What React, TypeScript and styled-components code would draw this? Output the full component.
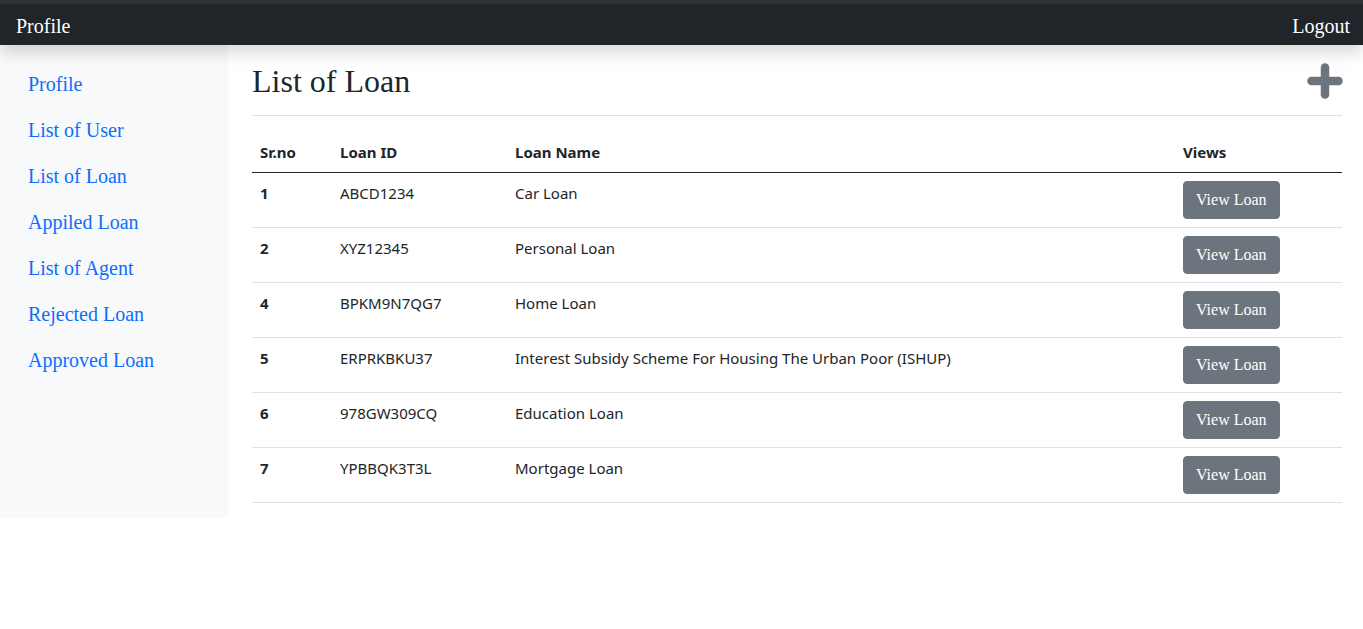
import React from "react";
import styled, { createGlobalStyle } from "styled-components";

const GlobalStyle = createGlobalStyle`
  body {
    margin: 0;
    background: #fff;
    font-family: "Liberation Serif", "Times New Roman", serif;
    color: #212529;
  }
  * { box-sizing: border-box; }
`;

const loans = [
  { sr: 1, id: "ABCD1234", name: "Car Loan" },
  { sr: 2, id: "XYZ12345", name: "Personal Loan" },
  { sr: 4, id: "BPKM9N7QG7", name: "Home Loan" },
  { sr: 5, id: "ERPRKBKU37", name: "Interest Subsidy Scheme For Housing The Urban Poor (ISHUP)" },
  { sr: 6, id: "978GW309CQ", name: "Education Loan" },
  { sr: 7, id: "YPBBQK3T3L", name: "Mortgage Loan" },
];

const menu = [
  "Profile",
  "List of User",
  "List of Loan",
  "Appiled Loan",
  "List of Agent",
  "Rejected Loan",
  "Approved Loan",
];

function PlusIcon() {
  return (
    <svg width="36" height="36" viewBox="0 0 36 36">
      <g stroke="#6c757d" strokeWidth="8.5" strokeLinecap="round">
        <line x1="18" y1="4.5" x2="18" y2="31.5" />
        <line x1="4.5" y1="18" x2="31.5" y2="18" />
      </g>
    </svg>
  );
}

function App() {
  return (
    <Page>
      <GlobalStyle />
      <NavBar>
        <Brand>Profile</Brand>
        <NavLink>Logout</NavLink>
      </NavBar>
      <Body>
        <Sidebar>
          {menu.map((item) => (
            <SideLink key={item}>{item}</SideLink>
          ))}
        </Sidebar>
        <Main>
          <TitleRow>
            <Title>List of Loan</Title>
            <AddButton>
              <PlusIcon />
            </AddButton>
          </TitleRow>
          <Rule />
          <Table>
            <thead>
              <tr>
                <Th width={80}>Sr.no</Th>
                <Th width={175}>Loan ID</Th>
                <Th width={668}>Loan Name</Th>
                <Th>Views</Th>
              </tr>
            </thead>
            <tbody>
              {loans.map((loan) => (
                <tr key={loan.sr}>
                  <Td bold>{loan.sr}</Td>
                  <Td>{loan.id}</Td>
                  <Td>{loan.name}</Td>
                  <Td>
                    <ViewButton>View Loan</ViewButton>
                  </Td>
                </tr>
              ))}
            </tbody>
          </Table>
        </Main>
      </Body>
    </Page>
  );
}

const Page = styled.div`
  min-height: 629px;
  border-top: 4px solid #333333;
`;

const NavBar = styled.nav`
  position: relative;
  z-index: 2;
  height: 41px;
  background: #212529;
  display: flex;
  align-items: center;
  justify-content: space-between;
  padding: 4px 13px 0 16px;
  box-shadow: 0 0.5rem 1rem rgba(0, 0, 0, 0.15);
`;

const Brand = styled.span`
  color: #fff;
  font-size: 20px;
`;

const NavLink = styled.span`
  color: #fff;
  font-size: 20px;
`;

const Body = styled.div`
  display: flex;
  align-items: flex-start;
`;

const Sidebar = styled.aside`
  width: 228px;
  height: 473px;
  background: #f8f9fa;
  padding: 16px 0 0 28px;
  display: flex;
  flex-direction: column;
`;

const SideLink = styled.a`
  color: #0d6efd;
  font-size: 20px;
  line-height: 30px;
  padding: 8px 0;
  cursor: pointer;
`;

const Main = styled.main`
  flex: 1;
  padding: 17px 21px 0 24px;
`;

const TitleRow = styled.div`
  display: flex;
  align-items: center;
  justify-content: space-between;
  height: 38px;
`;

const Title = styled.h1`
  margin: 0;
  font-size: 32px;
  font-weight: 400;
  line-height: 1.2;
`;

const AddButton = styled.span`
  display: flex;
  margin-right: -1px;
  cursor: pointer;
`;

const Rule = styled.hr`
  margin: 15px 0 16px;
  border: 0;
  border-top: 1px solid #dee2e6;
`;

const Table = styled.table`
  width: 100%;
  border-collapse: collapse;
  font-family: "Noto Sans", "Open Sans", sans-serif;
  font-size: 15px;
  color: #212529;
  table-layout: fixed;

  thead tr {
    border-bottom: 1px solid #212529;
  }
  tbody tr {
    border-bottom: 1px solid #dee2e6;
  }
`;

const Th = styled.th<{ width?: number }>`
  width: ${(p) => (p.width ? `${p.width}px` : "auto")};
  text-align: left;
  font-weight: 700;
  padding: 8px;
  line-height: 24px;
`;

const Td = styled.td<{ bold?: boolean }>`
  padding: 8px;
  vertical-align: top;
  line-height: 24px;
  font-weight: ${(p) => (p.bold ? 700 : 400)};
`;

const ViewButton = styled.button`
  font-family: "Liberation Serif", "Times New Roman", serif;
  font-size: 16px;
  line-height: 24px;
  color: #fff;
  background: #6c757d;
  border: 1px solid #6c757d;
  border-radius: 4px;
  padding: 6px 12px;
  cursor: pointer;
`;

export default App;
